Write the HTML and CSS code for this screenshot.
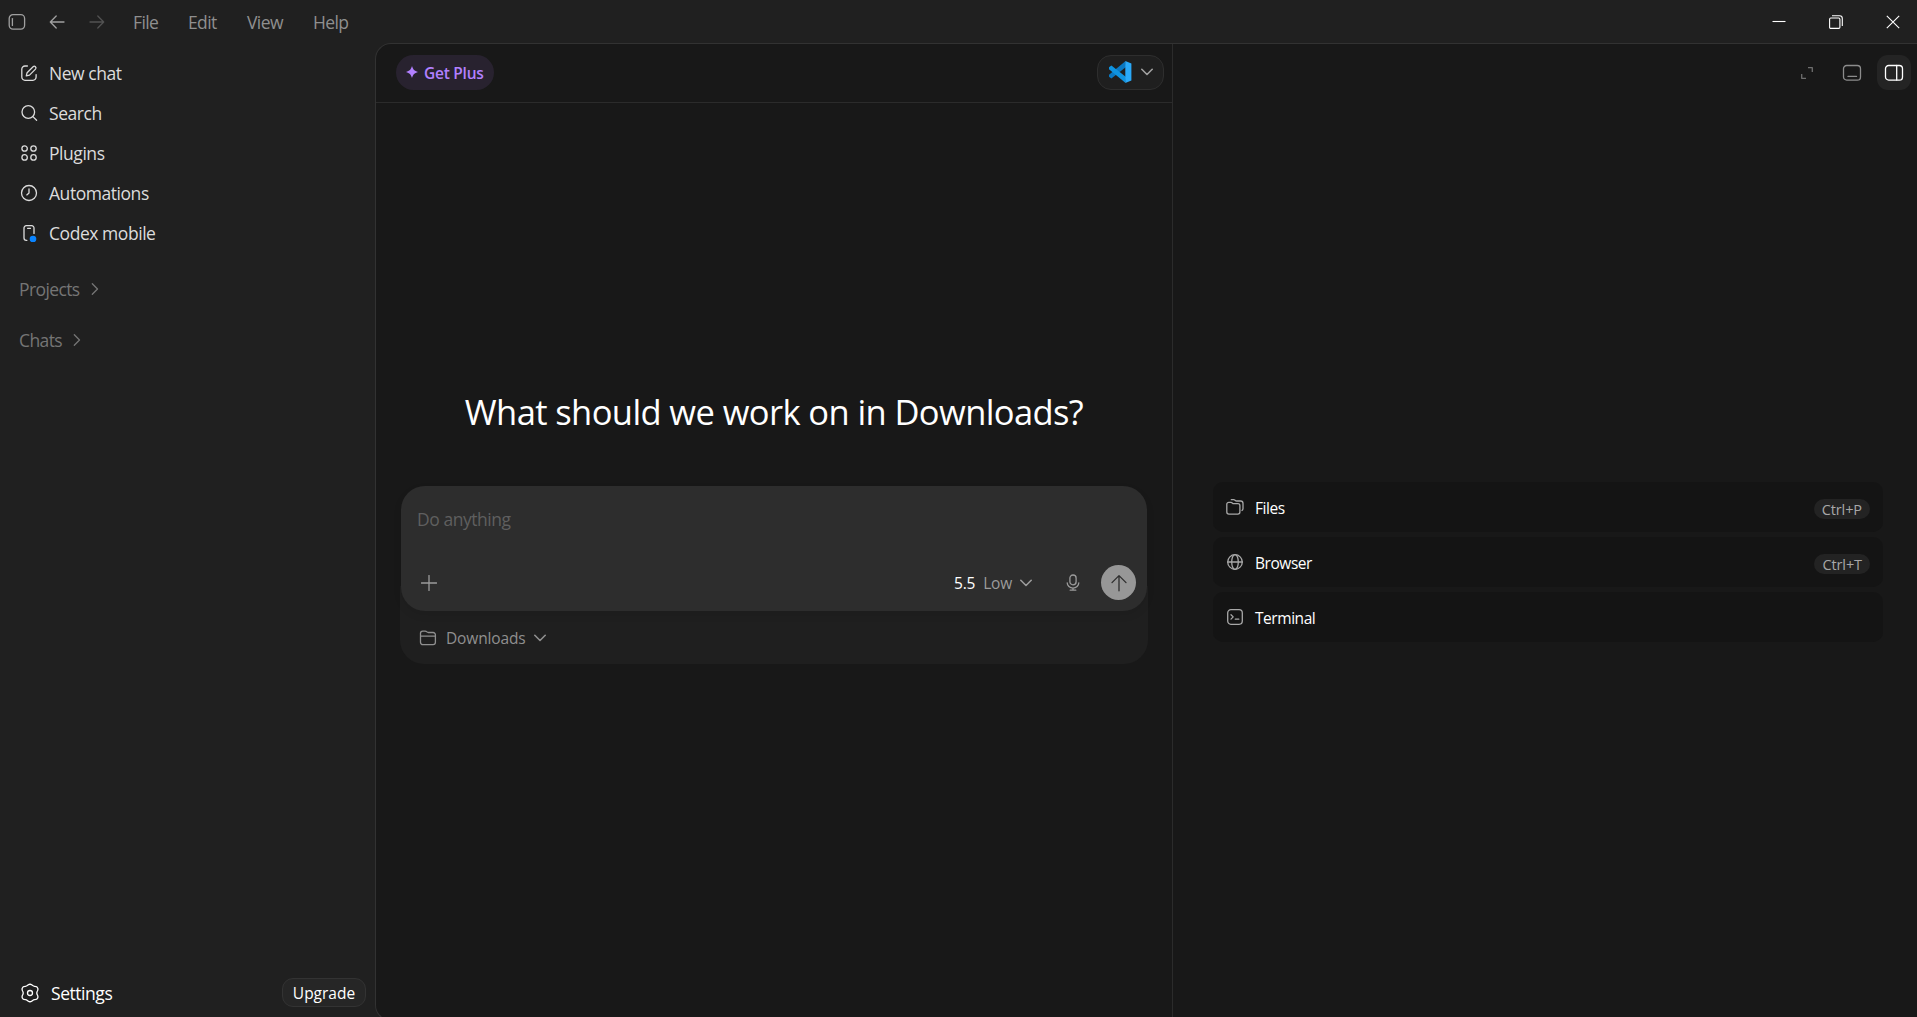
FILE: index.html
```html
<!DOCTYPE html>
<html lang="en">
<head>
    <meta charset="UTF-8">
    <meta name="viewport" content="width=device-width, initial-scale=1.0">
    <title>Codex</title>
    <link rel="stylesheet" href="styles.css">
</head>
<body>
    <header class="titlebar">
        <div class="nav-icons">
            <svg width="18" height="18" viewBox="0 0 18 18"><rect x="1.2" y="1.7" width="15.4" height="14.4" rx="3.8"/><path d="M4.4 5.6v6.800"/></svg>
            <svg width="18" height="18" viewBox="0 0 18 18"><path d="M16 9H2.600M8.200 3L2.300 9l5.900 6"/></svg>
            <svg class="disabled" width="18" height="18" viewBox="0 0 18 18"><path d="M2 9h13.400M9.800 3l5.900 6-5.900 6"/></svg>
        </div>
        <nav class="menu">
            <span class="menu-file">File</span>
            <span class="menu-edit">Edit</span>
            <span class="menu-view">View</span>
            <span class="menu-help">Help</span>
        </nav>
        <div class="window-controls">
            <svg width="14" height="14" viewBox="0 0 14 14"><path d="M.5 6.500h13"/></svg>
            <svg width="14" height="14" viewBox="0 0 14 14"><rect x=".6" y="3" width="10.300" height="10.400" rx="1.200"/><path d="M3 .7h7.600a2.700 2.700 0 0 1 2.700 2.700V11"/></svg>
            <svg width="14" height="14" viewBox="0 0 14 14"><path d="M.8.8l12.400 12.400M13.200.8L.8 13.200"/></svg>
        </div>
    </header>
    <div class="app">
        <aside class="sidebar">
            <ul class="side-nav">
                <li>
                    <svg width="18" height="18" viewBox="0 0 18 18"><path d="M7.400 2H5a3.200 3.200 0 0 0-3.200 3.200v7.900A3.200 3.200 0 0 0 5 16.300h7.900a3.200 3.200 0 0 0 3.200-3.200v-2.500"/><path d="M6.300 11.900l.8-3.200 6-6a1.700 1.700 0 0 1 2.400 2.400l-6 6z"/></svg>
                    <span>New chat</span>
                </li>
                <li>
                    <svg width="18" height="18" viewBox="0 0 18 18"><circle cx="8.300" cy="8" r="6.300"/><path d="M12.900 12.600l3.700 3.600"/></svg>
                    <span>Search</span>
                </li>
                <li>
                    <svg width="18" height="18" viewBox="0 0 18 18"><circle cx="4.600" cy="4.500" r="2.700"/><circle cx="13.500" cy="4.500" r="2.700"/><circle cx="4.600" cy="13.400" r="2.700"/><circle cx="13.500" cy="13.400" r="2.700"/></svg>
                    <span>Plugins</span>
                </li>
                <li>
                    <svg width="18" height="18" viewBox="0 0 18 18"><circle cx="9" cy="9" r="7.500"/><path d="M9 4.800V9l-2.200 1.900"/></svg>
                    <span>Automations</span>
                </li>
                <li>
                    <svg width="18" height="18" viewBox="0 0 18 18"><path d="M6.900 16.300H6.300a2.300 2.300 0 0 1-2.300-2.300V4a2.300 2.300 0 0 1 2.300-2.300h5.400A2.300 2.300 0 0 1 14 4v5.400M7.600 4.300h2.900"/><circle class="dot" cx="13" cy="15" r="3.300"/></svg>
                    <span>Codex mobile</span>
                </li>
            </ul>
            <div class="side-group projects">Projects
                <svg width="8" height="14" viewBox="0 0 8 14"><path d="M1.300 1.800L6.500 7l-5.200 5.200"/></svg>
            </div>
            <div class="side-group">Chats
                <svg width="8" height="14" viewBox="0 0 8 14"><path d="M1.300 1.800L6.500 7l-5.200 5.200"/></svg>
            </div>
            <div class="side-footer">
                <div class="settings">
                    <svg width="20" height="20" viewBox="0 0 20 20"><path d="M8.300 1.800a3 3 0 0 1 3.400 0c1 .7 1.700 1.500 2.800 1.500 1.600-.1 2.700.3 3.200 1.700.5 1.300.2 2.100-.3 3-.6 1-.6 3 0 4 .5.900.8 1.700.3 3-.5 1.400-1.600 1.800-3.200 1.700-1.100 0-1.800.8-2.800 1.500a3 3 0 0 1-3.400 0c-1-.7-1.700-1.500-2.800-1.500-1.600.1-2.700-.3-3.200-1.700-.5-1.300-.2-2.100.3-3 .6-1 .6-3 0-4-.5-.9-.8-1.700-.3-3 .5-1.400 1.600-1.800 3.200-1.700 1.100 0 1.800-.8 2.800-1.500z"/><circle cx="10" cy="10" r="2.500"/></svg>
                    <span>Settings</span>
                </div>
                <button class="upgrade">Upgrade</button>
            </div>
        </aside>
        <div class="workspace">
            <main class="chat">
                <div class="chat-header">
                    <button class="get-plus">
                        <svg width="12" height="12" viewBox="0 0 12 12"><path d="M6 0c1.200 3.700 2.300 4.800 6 6-3.700 1.200-4.800 2.300-6 6-1.200-3.700-2.300-4.800-6-6 3.700-1.200 4.800-2.300 6-6z"/></svg>
                        <span>Get Plus</span>
                    </button>
                    <button class="open-in">
                        <svg class="vscode" width="24" height="24" viewBox="0 0 24 24">
                            <path d="M17.300 1.200L18 7 3.400 18.400 1 16.800v-2z" fill="#0a78c2"/>
                            <path d="M17.300 22.800L18 17 3.400 5.600 1 7.200v2z" fill="#0f93e0"/>
                            <path d="M17.300 1L23.400 3.600v16.800L17.300 23z" fill="#2aa9f8"/>
                        </svg>
                        <svg class="chevron" width="12" height="8" viewBox="0 0 12 8"><path d="M.8 1.300L6 6.500l5.200-5.200"/></svg>
                    </button>
                </div>
                <h1>What should we work on in Downloads?</h1>
                <div class="composer">
                    <div class="composer-box">
                        <div class="placeholder">Do anything</div>
                        <div class="composer-tools">
                            <svg width="16" height="16" viewBox="0 0 16 16"><path d="M8 .5v15M.5 8h15"/></svg>
                            <div class="model">
                                <span class="version">5.5</span>
                                <span class="effort">Low</span>
                                <svg class="chevron" width="12" height="8" viewBox="0 0 12 8"><path d="M.8 1.300L6 6.500l5.200-5.200"/></svg>
                            </div>
                            <svg class="mic" width="14" height="18" viewBox="0 0 14 18"><rect x="3.900" y="1" width="6.200" height="9.800" rx="3.100"/><path d="M1.200 8.800a5.800 5.300 0 0 0 11.600 0M7 14.200v2M4.200 16.200h5.600"/></svg>
                            <button class="send">
                                <svg width="18" height="18" viewBox="0 0 18 18"><path d="M9 16.800V1.800M2 8.600l7-7 7 7"/></svg>
                            </button>
                        </div>
                    </div>
                    <div class="composer-folder">
                        <svg width="18" height="16" viewBox="0 0 18 16"><path d="M1.500 6.200V3.300A2.200 2.200 0 0 1 3.700 1.100h2.500c.8 0 1.300.4 1.700.8.4.4.900.6 1.500.6h4.700a2.300 2.300 0 0 1 2.300 2.300v7.500a2.300 2.300 0 0 1-2.300 2.300H3.800a2.300 2.300 0 0 1-2.300-2.300V6.200h14.900"/></svg>
                        <span>Downloads</span>
                        <svg class="chevron" width="12" height="8" viewBox="0 0 12 8"><path d="M.8 1.300L6 6.500l5.200-5.200"/></svg>
                    </div>
                </div>
            </main>
            <section class="side-panel">
                <div class="panel-header">
                    <svg class="expand" width="14" height="14" viewBox="0 0 14 14"><path d="M8 1.700h4.300V6M1.700 8v4.300H6"/></svg>
                    <svg class="bottom-icon" width="20" height="18" viewBox="0 0 20 18"><rect x="1.500" y="1.500" width="17" height="14.600" rx="3.200"/><path d="M6 12.400h8.500"/></svg>
                    <button class="panel-toggle">
                        <svg width="20" height="18" viewBox="0 0 20 18"><rect x="1.500" y="1.500" width="17" height="14.600" rx="3.200"/><path d="M12.700 1.500v14.600"/></svg>
                    </button>
                </div>
                <div class="launchers">
                    <div class="launcher">
                        <svg width="18" height="18" viewBox="0 0 18 18"><path d="M.8 6.300a2 2 0 0 1 2-2h2.200c1.200 0 1.300 1.300 2.800 1.300h4.100a2 2 0 0 1 2 2V14a2.100 2.100 0 0 1-2.100 2.100H2.900A2.100 2.100 0 0 1 .8 14z"/><path d="M5.300 1.700h2.400c1.300 0 1.400 1.300 2.900 1.300h4a2.400 2.400 0 0 1 2.400 2.400v5.200c0 1-.4 1.500-1 1.900"/></svg>
                        <span>Files</span>
                        <kbd>Ctrl+P</kbd>
                    </div>
                    <div class="launcher">
                        <svg width="18" height="18" viewBox="0 0 18 18"><circle cx="9" cy="9" r="7.300"/><ellipse cx="9" cy="9" rx="3.300" ry="7.300"/><path d="M1.700 9h14.600"/></svg>
                        <span>Browser</span>
                        <kbd>Ctrl+T</kbd>
                    </div>
                    <div class="launcher">
                        <svg width="18" height="18" viewBox="0 0 18 18"><rect x="1.700" y="1.700" width="14.600" height="14.600" rx="3.200"/><path d="M5 6.700l2.200 2.200L5 11.100M9.300 11.200h3.500"/></svg>
                        <span>Terminal</span>
                    </div>
                </div>
            </section>
        </div>
    </div>
</body>
</html>
```
FILE: styles.css
```css
* {
    box-sizing: border-box;
}
body {
    margin: 0;
    height: 100vh;
    overflow: hidden;
    display: flex;
    flex-direction: column;
    background-color: #202020;
    color: #ffffff;
    font-family: "Open Sans", "Noto Sans", sans-serif;
    font-size: 17.5px;
    letter-spacing: -0.45px;
    white-space: nowrap;
}
svg {
    display: block;
    flex: none;
    fill: none;
    stroke: currentColor;
    stroke-width: 1.3;
    stroke-linecap: round;
    stroke-linejoin: round;
}
button {
    font-family: inherit;
    color: inherit;
    border: none;
    padding: 0;
    display: flex;
    align-items: center;
}

/* Title bar */
.titlebar {
    flex: none;
    height: 43px;
    display: flex;
    align-items: center;
    padding-left: 8px;
}
.nav-icons {
    display: flex;
    gap: 22px;
    color: #a0a0a0;
}
.disabled {
    color: #525252;
}
.menu {
    display: flex;
    padding-top: 1px;
    margin-left: 27px;
    color: #8f8f8f;
    letter-spacing: -0.6px;
}
.menu-file {
    width: 55px;
}
.menu-edit {
    width: 59px;
}
.menu-view {
    width: 66px;
}
.window-controls {
    display: flex;
    gap: 43px;
    margin-left: auto;
    padding-right: 17px;
}
.window-controls svg {
    stroke-linecap: butt;
    stroke-width: 1.1;
}

/* Sidebar */
.app {
    flex: 1;
    display: flex;
    min-height: 0;
}
.sidebar {
    flex: none;
    width: 375px;
    display: flex;
    flex-direction: column;
}
.side-nav {
    list-style: none;
    margin: 0;
    padding: 10px 0 0 20px;
    color: #dcdcdc;
}
.side-nav li {
    height: 40px;
    display: flex;
    align-items: center;
    gap: 11px;
}
.dot {
    fill: #0a84ff;
    stroke: none;
}
.side-group {
    display: flex;
    align-items: center;
    height: 51px;
    padding-left: 19px;
    gap: 11px;
    color: #757575;
    letter-spacing: -0.6px;
}
.projects {
    margin-top: 10px;
}
.side-footer {
    margin-top: auto;
    height: 49px;
    padding: 0 9px 0 20px;
    display: flex;
    justify-content: space-between;
}
.settings {
    display: flex;
    align-items: center;
    height: 49px;
    gap: 11px;
}
.settings span {
    padding-top: 1px;
}
.upgrade {
    width: 84px;
    height: 29px;
    margin-top: 10px;
    padding-top: 1px;
    justify-content: center;
    border: 1px solid #333333;
    border-radius: 11px;
    background-color: #262626;
    font-size: 15.5px;
}

/* Workspace */
.workspace {
    flex: 1;
    display: flex;
    height: calc(100% + 4px);
    border: 1px solid #323232;
    border-right: none;
    border-radius: 16px 0 0 16px;
    background-color: #181818;
}
.chat {
    width: 797px;
    border-right: 1px solid #2b2b2b;
    display: flex;
    flex-direction: column;
}
.chat-header {
    display: flex;
    justify-content: space-between;
    align-items: center;
    height: 59px;
    padding: 0 8px 2px 20px;
    border-bottom: 1px solid #2b2b2b;
}
.get-plus {
    width: 98px;
    height: 35px;
    padding-left: 10px;
    gap: 6px;
    border-radius: 18px;
    background-color: #28222f;
    color: #b280ff;
    font-size: 15.5px;
    font-weight: 600;
    letter-spacing: -0.25px;
}
.get-plus span {
    padding-top: 2px;
}
.get-plus svg {
    fill: currentColor;
    stroke: none;
}
.open-in {
    width: 67px;
    height: 35px;
    padding-left: 10px;
    gap: 9px;
    border: 1px solid #2e2e2e;
    border-radius: 14px;
    background-color: #1f1f1f;
    color: #a0a0a0;
}
.vscode {
    stroke: none;
}
.chevron {
    stroke-width: 1.6;
}
h1 {
    margin: 281px 0 0;
    height: 55px;
    line-height: 55px;
    text-align: center;
    font-size: 34.5px;
    font-weight: 400;
    letter-spacing: -0.6px;
}
.composer {
    margin: 47px 24px 0;
}
.composer-box {
    position: relative;
    height: 125px;
    margin: 0 1px;
    padding: 19px 11px 0 16px;
    border-radius: 24px;
    background-color: #2d2d2d;
    box-shadow: 0 4px 8px rgba(0, 0, 0, 0.08);
}
.placeholder {
    height: 28px;
    line-height: 28px;
    color: #5f5f5f;
}
.composer-tools {
    display: flex;
    align-items: center;
    height: 35px;
    margin-top: 32px;
    padding-left: 4px;
    color: #9b9b9b;
}
.model {
    display: flex;
    align-items: center;
    gap: 8px;
    margin-left: auto;
    font-size: 15.5px;
    letter-spacing: -0.2px;
}
.model span {
    padding-top: 1px;
}
.version {
    color: #ffffff;
}
.mic {
    margin: 0 21px 0 34px;
}
.send {
    width: 35px;
    height: 35px;
    justify-content: center;
    border-radius: 50%;
    background-color: #979797;
    color: #2d2d2d;
}
.composer-folder {
    display: flex;
    align-items: center;
    height: 78px;
    margin-top: -25px;
    padding: 25px 0 0 19px;
    gap: 9px;
    border-radius: 0 0 24px 24px;
    background-color: #1f1f1f;
    color: #8f8f8f;
    font-size: 15.5px;
    letter-spacing: -0.15px;
}
.composer-folder span {
    padding-top: 1px;
}

/* Right panel */
.side-panel {
    flex: 1;
}
.panel-header {
    height: 59px;
    display: flex;
    align-items: center;
    justify-content: flex-end;
    padding: 0 6px 2px 0;
    color: #8c8c8c;
}
.expand {
    stroke-linecap: butt;
    color: #6e6e6e;
}
.bottom-icon {
    margin: 0 15px 0 28px;
}
.panel-toggle {
    width: 34px;
    height: 35px;
    justify-content: center;
    border-radius: 11px;
    background-color: #242424;
    color: #ffffff;
}
.launchers {
    display: flex;
    flex-direction: column;
    gap: 5px;
    padding: 379px 34px 0 40px;
}
.launcher {
    display: flex;
    align-items: center;
    height: 50px;
    padding: 0 13px;
    gap: 11px;
    border-radius: 10px;
    background-color: #141414;
    font-size: 15.5px;
    font-weight: 500;
}
.launcher span {
    padding-top: 1px;
}
.launcher svg {
    color: #a8a8a8;
}
kbd {
    margin: 4px 0 0 auto;
    height: 20px;
    line-height: 21px;
    padding: 0 8px;
    border-radius: 10px;
    background-color: #232323;
    color: #a8a8a8;
    font-family: inherit;
    font-size: 14.5px;
    font-weight: 400;
    letter-spacing: -0.1px;
}
```
